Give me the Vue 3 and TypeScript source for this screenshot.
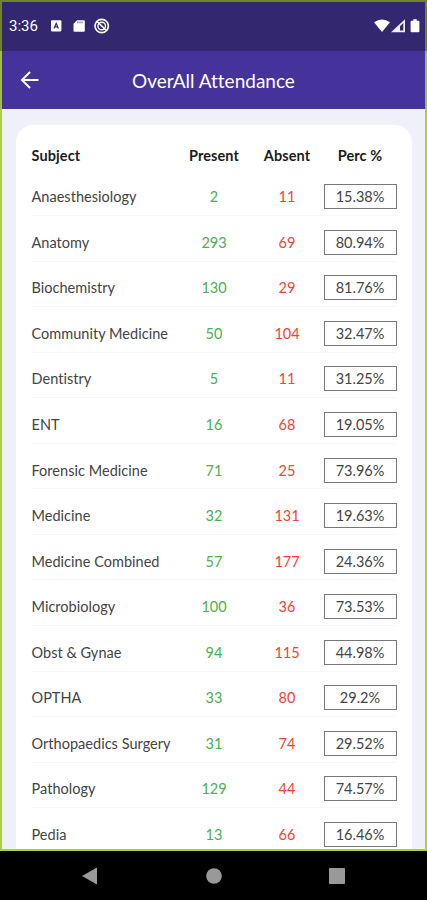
<script setup lang="ts">
interface SubjectRow {
  subject: string
  present: number
  absent: number
  percent: string
}

const rows: SubjectRow[] = [
  { subject: 'Anaesthesiology', present: 2, absent: 11, percent: '15.38%' },
  { subject: 'Anatomy', present: 293, absent: 69, percent: '80.94%' },
  { subject: 'Biochemistry', present: 130, absent: 29, percent: '81.76%' },
  { subject: 'Community Medicine', present: 50, absent: 104, percent: '32.47%' },
  { subject: 'Dentistry', present: 5, absent: 11, percent: '31.25%' },
  { subject: 'ENT', present: 16, absent: 68, percent: '19.05%' },
  { subject: 'Forensic Medicine', present: 71, absent: 25, percent: '73.96%' },
  { subject: 'Medicine', present: 32, absent: 131, percent: '19.63%' },
  { subject: 'Medicine Combined', present: 57, absent: 177, percent: '24.36%' },
  { subject: 'Microbiology', present: 100, absent: 36, percent: '73.53%' },
  { subject: 'Obst & Gynae', present: 94, absent: 115, percent: '44.98%' },
  { subject: 'OPTHA', present: 33, absent: 80, percent: '29.2%' },
  { subject: 'Orthopaedics Surgery', present: 31, absent: 74, percent: '29.52%' },
  { subject: 'Pathology', present: 129, absent: 44, percent: '74.57%' },
  { subject: 'Pedia', present: 13, absent: 66, percent: '16.46%' },
]
</script>

<template>
  <div class="phone">
    <header class="status">
      <span class="time">3:36</span>
      <svg class="left-icons" viewBox="0 0 60 16" width="60" height="16">
        <rect x="1" y="2.3" width="10.4" height="11.2" rx="1" fill="#fff" />
        <path d="M4 10.5 6.2 5.2 8.4 10.5M4.8 8.9h2.8" fill="none" stroke="#33276f" stroke-width="1.2" />
        <path d="M27 2.2h6.8a1 1 0 0 1 1 1v9.6a1 1 0 0 1-1 1h-9.3a1 1 0 0 1-1-1V5.7z" fill="#fff" />
        <path d="M27.9 3.5v1.8M30 3.5v1.8M32.1 3.5v1.8" stroke="#33276f" stroke-width=".8" />
        <circle cx="51.7" cy="8" r="6.7" fill="none" stroke="#fff" stroke-width="1.7" />
        <circle cx="51.7" cy="8" r="3.8" fill="none" stroke="#fff" stroke-width="1.4" />
        <path d="M47 3.5 56.4 12.5" stroke="#fff" stroke-width="1.7" />
      </svg>
      <svg class="right-icons" viewBox="0 0 48 16" width="48" height="16">
        <path d="M0 4.3Q8-1.4 16 4.3L8 14z" fill="#fff" />
        <path d="M17 14.2 31 1.2V14.2z" fill="#f1edff" />
        <path d="M26 8.3 29.3 5.1V12.4H26z" fill="#33276f" />
        <path d="M39.3 2.8V1.2h3.4v1.6h1.7a1 1 0 0 1 1 1v9.5a1 1 0 0 1-1 1h-6.8a1 1 0 0 1-1-1V3.8a1 1 0 0 1 1-1z" fill="#fff" />
      </svg>
    </header>
    <div class="appbar">
      <svg class="back" viewBox="0 0 20 20" width="20" height="20">
        <path d="M18.5 10H2.2M10 2 2 10l8 8" fill="none" stroke="#fff" stroke-width="2" />
      </svg>
      <h1>OverAll Attendance</h1>
    </div>
    <main class="content">
      <section class="card">
        <div class="line head">
          <span>Subject</span><span>Present</span><span>Absent</span><span>Perc %</span>
        </div>
        <div v-for="row in rows" :key="row.subject" class="line row">
          <span class="subject">{{ row.subject }}</span>
          <span class="present">{{ row.present }}</span>
          <span class="absent">{{ row.absent }}</span>
          <span class="percent">{{ row.percent }}</span>
        </div>
      </section>
    </main>
    <nav class="nav">
      <svg viewBox="0 0 20 20" width="20" height="20"><path d="M2 10 17 1.5v17z" fill="#999" /></svg>
      <svg viewBox="0 0 20 20" width="20" height="20"><circle cx="10" cy="10" r="7.8" fill="#999" /></svg>
      <svg viewBox="0 0 20 20" width="20" height="20"><rect x="2" y="2" width="16" height="16" rx="1" fill="#999" /></svg>
    </nav>
  </div>
</template>

<style>
body {
  margin: 0;
  overflow: hidden;
}
</style>

<style scoped>
.phone {
  width: 427px;
  height: 900px;
  display: flex;
  flex-direction: column;
  box-sizing: border-box;
  overflow: hidden;
  background: #000;
  font-family: Lato, sans-serif;
  font-variant-ligatures: none;
}
.phone * {
  box-sizing: border-box;
}
.status {
  flex: 0 0 51px;
  display: flex;
  align-items: center;
  background: #33276f;
  border: 2px solid #6f832f;
  border-bottom: 0;
  padding: 0 3px 1px 7px;
  color: #fff;
}
.time {
  width: 41px;
  font: 15px/20px Roboto, sans-serif;
}
.right-icons {
  margin-left: auto;
}
.appbar {
  flex: 0 0 58px;
  display: grid;
  grid-template-columns: 40px 1fr 40px;
  align-items: center;
  padding: 0 2px 0 18px;
  background: #46329b;
  border-left: 2px solid #a0be42;
  border-right: 2px solid #a0be42;
  color: #fff;
}
h1 {
  margin: 0;
  padding: 2px 16px 0 0;
  text-align: center;
  font-size: 19px;
  line-height: 24px;
  font-weight: 400;
}
.content {
  flex: 0 0 742px;
  overflow: hidden;
  padding: 16px 13px 0 14px;
  background: #eff0fa;
  border: 2px solid #add13e;
  border-top: 0;
}
.card {
  height: 800px;
  padding: 15px 16px 0 15.5px;
  border-radius: 17px;
  background: #fff;
}
.line {
  display: grid;
  grid-template-columns: 146px 73px 73px 73px;
  align-items: center;
  text-align: center;
  font-size: 14.5px;
  white-space: nowrap;
}
.line > :first-child {
  text-align: left;
}
.head {
  height: 30.4px;
  font-weight: 700;
  color: #1c1c1c;
  align-items: start;
  line-height: 32px;
  letter-spacing: 0.1px;
}
.row {
  height: 45.57px;
  border-bottom: 1px solid #f7f7f7;
  padding-top: 8px;
}
.subject {
  color: #444;
  letter-spacing: 0.03px;
}
.present {
  color: #4caf50;
}
.absent {
  color: #f44336;
}
.percent {
  height: 25px;
  border: 1px solid #777;
  line-height: 24px;
  color: #444;
}
.nav {
  flex: 1;
  display: flex;
  justify-content: space-between;
  align-items: center;
  padding: 0 80px 0 80px;
}
</style>
